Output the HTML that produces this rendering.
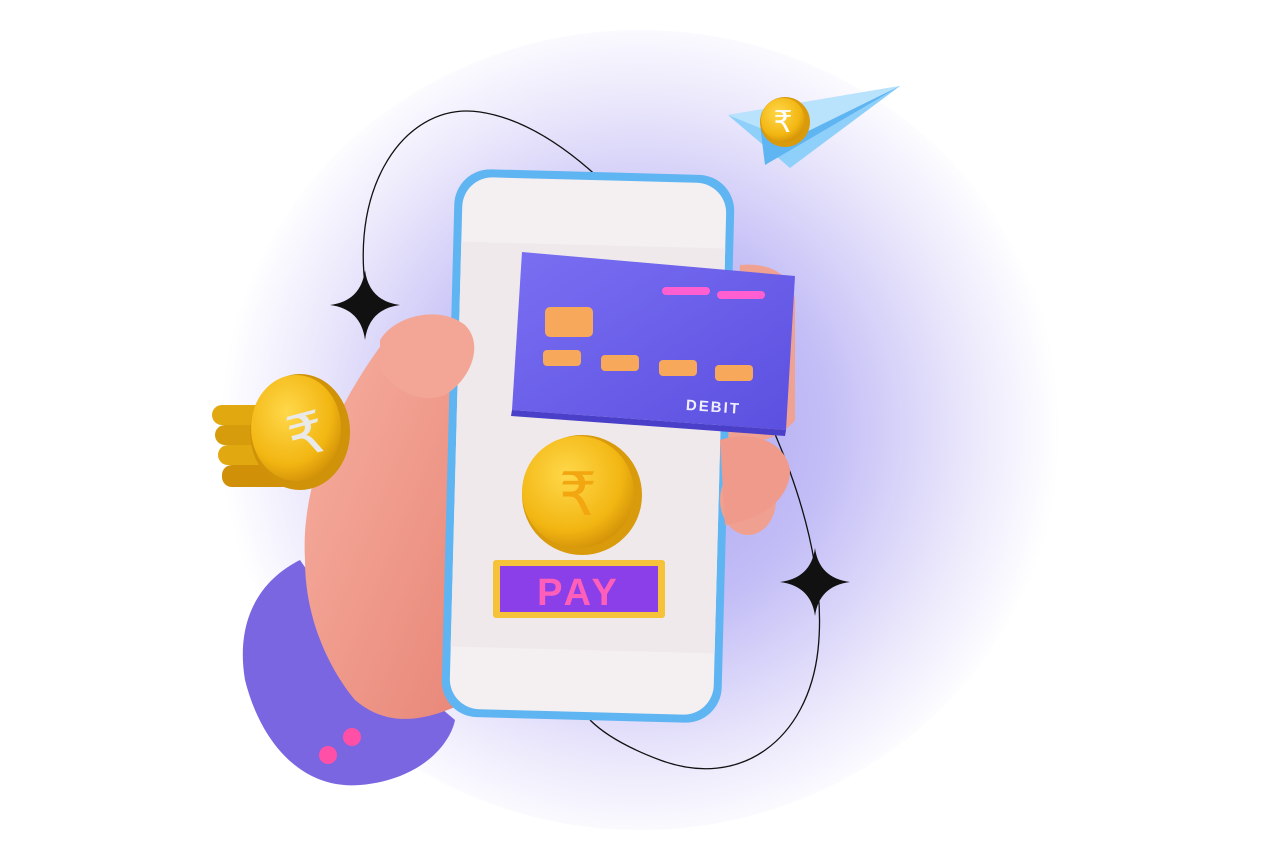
<!DOCTYPE html>
<html><head><meta charset="utf-8"><style>
html,body{margin:0;padding:0;background:#fff;width:1282px;height:864px;overflow:hidden}
svg{display:block}
</style></head><body>
<svg width="1282" height="864" viewBox="0 0 1282 864" xmlns="http://www.w3.org/2000/svg">
<defs>
<radialGradient id="glow" cx="640" cy="430" r="420" gradientUnits="userSpaceOnUse">
<stop offset="0" stop-color="#aaa3f2"/><stop offset="0.45" stop-color="#c3bef6"/><stop offset="0.8" stop-color="#ece9fc"/><stop offset="1" stop-color="#fff"/></radialGradient>
<radialGradient id="gold" cx="0.4" cy="0.35" r="0.7"><stop offset="0" stop-color="#ffd84a"/><stop offset="0.7" stop-color="#f2b612"/><stop offset="1" stop-color="#d08f08"/></radialGradient>
<linearGradient id="skin" x1="0" y1="0" x2="1" y2="1"><stop offset="0" stop-color="#f7b0a0"/><stop offset="1" stop-color="#e88678"/></linearGradient>
<linearGradient id="card" x1="0" y1="0" x2="1" y2="1"><stop offset="0" stop-color="#7a6ff2"/><stop offset="1" stop-color="#5b4fe0"/></linearGradient>
</defs>
<ellipse cx="640" cy="430" rx="420" ry="400" fill="url(#glow)"/>
<!-- orbit -->
<path d="M372 320 C340 200 400 100 480 112 C560 124 640 210 700 300 C770 400 830 540 818 650 C808 740 740 790 660 760 C620 745 600 730 590 720" fill="none" stroke="#111" stroke-width="1.3"/>
<!-- sleeve -->
<path d="M300 560 C260 580 235 620 245 680 C260 740 300 790 360 785 C420 780 450 745 455 720 C420 690 340 620 300 560Z" fill="#7a66e0"/>
<circle cx="328" cy="755" r="9" fill="#ff4fa6"/><circle cx="352" cy="737" r="9" fill="#ff4fa6"/>
<!-- hand back -->
<path d="M305 560 C300 480 340 400 385 340 C400 320 440 305 465 325 C480 340 470 370 450 390 L470 700 C430 720 390 730 355 700 C330 670 305 620 305 560Z" fill="url(#skin)"/>
<path d="M740 265 C770 262 792 275 795 300 L795 420 C780 440 740 450 725 440 Z" fill="#f0a292"/>
<!-- phone -->
<g transform="rotate(1.5 588 446)">
<rect x="448" y="172" width="280" height="548" rx="36" fill="#5fb4f2"/>
<rect x="456" y="180" width="264" height="532" rx="30" fill="#f4eff1"/>
<rect x="456" y="245" width="264" height="405" fill="#efe9ec"/>
</g>
<!-- thumb -->
<path d="M380 340 C395 315 440 305 465 325 C485 345 470 380 445 395 C420 405 395 390 380 370Z" fill="#f3a696"/>
<!-- fingers right -->
<ellipse cx="748" cy="500" rx="28" ry="35" fill="#f0a090"/>
<path d="M720 440 C750 430 785 440 790 470 C790 500 760 520 725 525Z" fill="#ef9a8a"/>
<!-- card -->
<path d="M522 252 L795 276 L786 430 L512 410 Z" fill="url(#card)"/>
<path d="M512 410 L786 430 L785 436 L511 416Z" fill="#4a3fc8"/>
<rect x="662" y="287" width="48" height="8" rx="4" fill="#ff5fd0"/>
<rect x="717" y="291" width="48" height="8" rx="4" fill="#ff5fd0"/>
<rect x="545" y="307" width="48" height="30" rx="5" fill="#f7a85a"/>
<rect x="543" y="350" width="38" height="16" rx="4" fill="#f7a85a"/>
<rect x="601" y="355" width="38" height="16" rx="4" fill="#f7a85a"/>
<rect x="659" y="360" width="38" height="16" rx="4" fill="#f7a85a"/>
<rect x="715" y="365" width="38" height="16" rx="4" fill="#f7a85a"/>
<text x="686" y="412" font-family="Liberation Sans, sans-serif" font-weight="bold" font-size="15" fill="#f0eeff" letter-spacing="2" transform="rotate(4 716 406)">DEBIT</text>
<!-- coin -->
<circle cx="582" cy="495" r="60" fill="#d99a0c"/>
<circle cx="578" cy="492" r="56" fill="url(#gold)"/>
<text x="578" y="515" text-anchor="middle" font-family="DejaVu Sans, sans-serif" font-size="60" fill="#f2a610">₹</text>
<!-- PAY -->
<rect x="493" y="560" width="172" height="58" rx="3" fill="#f5c23a"/>
<rect x="500" y="566" width="158" height="46" fill="#8b3fe8"/>
<text x="579" y="605" text-anchor="middle" font-family="Liberation Sans, sans-serif" font-weight="bold" font-size="38" fill="#ff5fb8" letter-spacing="4">PAY</text>
<!-- coin stack -->
<rect x="212" y="405" width="70" height="20" rx="10" fill="#e2a80f"/>
<rect x="215" y="425" width="70" height="20" rx="10" fill="#d69c0c"/>
<rect x="218" y="445" width="70" height="20" rx="10" fill="#e2a80f"/>
<rect x="222" y="465" width="70" height="22" rx="10" fill="#d09008"/>
<ellipse cx="300" cy="432" rx="50" ry="58" fill="#cf9208"/>
<ellipse cx="296" cy="428" rx="45" ry="53" fill="url(#gold)"/>
<text x="305" y="455" text-anchor="middle" font-family="DejaVu Sans, sans-serif" font-size="58" fill="#e9e9e9" transform="rotate(-15 305 430)">₹</text>
<!-- plane -->
<path d="M728 115 L900 86 L790 168 Z" fill="#8fd0fa"/>
<path d="M760 125 L900 86 L765 165 Z" fill="#5fb4f2"/>
<path d="M728 115 L790 140 L900 86Z" fill="#b9e3fd"/>
<circle cx="785" cy="122" r="25" fill="#d99a0c"/>
<circle cx="783" cy="120" r="22" fill="url(#gold)"/>
<text x="783" y="132" text-anchor="middle" font-family="DejaVu Sans, sans-serif" font-size="30" fill="#fff">₹</text>
<!-- sparkles -->
<path d="M365 270 Q369 301 400 305 Q369 309 365 340 Q361 309 330 305 Q361 301 365 270Z" fill="#111"/>
<path d="M815 548 Q819 578 850 582 Q819 586 815 616 Q811 586 780 582 Q811 578 815 548Z" fill="#111"/>
</svg>
</body></html>
